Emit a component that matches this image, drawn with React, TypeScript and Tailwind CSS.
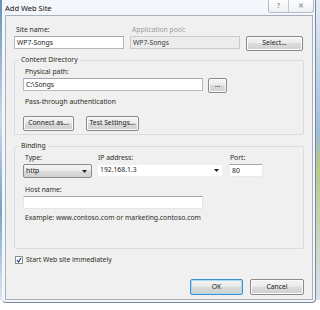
import React from 'react';

const font = { fontFamily: '"Noto Sans", "Open Sans", sans-serif' };

const Button: React.FC<{ label: string; className?: string; primary?: boolean }> = ({ label, className = '', primary }) => (
  <div
    className={`flex items-center justify-center whitespace-nowrap rounded-[2px] border text-[6.8px] text-[#1b1b1b] bg-[linear-gradient(#f4f4f4_0%,#ececec_45%,#dcdcdc_50%,#d0d0d0_100%)] ${
      primary ? 'border-[#3c8fc8] shadow-[inset_0_0_0_1px_#a8dcf5]' : 'border-[#8a8a8a] shadow-[inset_0_0_0_1px_#fbfbfb]'
    } ${className}`}
  >
    {label}
  </div>
);

const Label: React.FC<{ children: React.ReactNode; className?: string }> = ({ children, className = '' }) => (
  <div className={`text-[6.8px] leading-[10px] whitespace-nowrap text-[#2b2b22] ${className}`}>{children}</div>
);

const TextBox: React.FC<{ value?: string; className?: string; disabled?: boolean }> = ({ value = '', className = '', disabled }) => (
  <div
    className={`flex items-center px-[2px] border text-[6.8px] leading-[10px] ${
      disabled ? 'bg-[#ececec] border-[#c9cbcd] text-[#3a3a3a]' : 'bg-white border-[#b5b9bf] border-t-[#9ea3aa] text-[#1b1b1b]'
    } ${className}`}
  >
    {value}
  </div>
);

const Arrow = () => (
  <svg width="5" height="3" viewBox="0 0 5 3">
    <path d="M0 0h5L2.5 3z" fill="#222" />
  </svg>
);

export default function App() {
  return (
    <div className="w-[320px] h-[310px] bg-white relative overflow-hidden" style={font}>
      {/* desktop behind */}
      <div className="absolute left-0 top-0 w-[3px] h-[300px] bg-[linear-gradient(#6b8fb8,#c9d9ea_40%,#7aa0c8_70%,#dde8f2)]" />
      <div className="absolute right-0 top-0 w-[4px] h-[300px] bg-[linear-gradient(#e4ecf4,#9fbbd8_45%,#b6c98a_55%,#d7e3ef)]" />

      {/* window frame */}
      <div className="ml-[2px] w-[314px] h-[303px] flex flex-col bg-[#f3f6fa] border-r border-b border-[#7c8898] rounded-b-[4px] relative">
        <div className="h-[15px] flex items-start pl-[3px] pt-[3px]">
          <span className="text-[7.5px] leading-[10px] text-[#111]">Add Web Site</span>
        </div>
        <div className="absolute right-[1px] top-0 flex h-[13px] border border-t-0 border-[#b3bcc7] rounded-b-[3px] bg-[linear-gradient(#fdfdfd,#eef1f5)]">
          <div className="w-[20px] flex items-center justify-center border-r border-[#c3cad2] text-[7px] text-[#9aa0a7] font-bold">?</div>
          <div className="w-[24px] flex items-center justify-center text-[7px] text-[#9aa0a7] font-bold">✕</div>
        </div>

        {/* client area */}
        <div className="ml-[3px] w-[308px] h-[285px] border border-[#a7b0bb] bg-[#f0f0f0] flex flex-col pl-[8px] pr-[8px]">
          {/* site name row */}
          <div className="flex mt-[9px]">
            <div className="flex flex-col w-[110px]">
              <Label className="pl-[2px]">Site name:</Label>
              <TextBox value="WP7-Songs" className="h-[13px] mt-[1px]" />
            </div>
            <div className="flex flex-col w-[110px] ml-[6px]">
              <Label className="pl-[2px] text-[#9a9a9a]">Application pool:</Label>
              <TextBox value="WP7-Songs" disabled className="h-[13px] mt-[1px]" />
            </div>
            <Button label="Select..." className="w-[57px] h-[15px] ml-[6px] mt-[11px]" />
          </div>

          {/* content directory */}
          <fieldset className="mt-[4px] border border-[#d5dde3] rounded-[2px] px-[8px] pb-[9px] h-[80px]">
            <legend className="px-[2px] ml-[-4px] text-[6.8px] leading-[10px] text-[#2b2b22]">Content Directory</legend>
            <Label className="pl-[2px] mt-[2px]">Physical path:</Label>
            <div className="flex items-start mt-[1px]">
              <TextBox value="C:\Songs" className="w-[180px] h-[13px]" />
              <Button label="..." className="w-[19px] h-[15px] ml-[5px]" />
            </div>
            <Label className="pl-[2px] mt-[4px]">Pass-through authentication</Label>
            <div className="flex mt-[9px]">
              <Button label="Connect as..." className="w-[51px] h-[15px]" />
              <Button label="Test Settings..." className="w-[53px] h-[15px] ml-[12px]" />
            </div>
          </fieldset>

          {/* binding */}
          <fieldset className="mt-[6px] border border-[#d5dde3] rounded-[2px] px-[8px] h-[108px]">
            <legend className="px-[2px] ml-[-4px] text-[6.8px] leading-[10px] text-[#2b2b22]">Binding</legend>
            <div className="flex mt-[2px]">
              <div className="flex flex-col w-[69px]">
                <Label className="pl-[2px]">Type:</Label>
                <div className="flex items-center justify-between h-[14px] mt-[1px] pl-[2px] pr-[4px] rounded-[2px] border border-[#8a8a8a] bg-[linear-gradient(#f4f4f4_0%,#ececec_45%,#dcdcdc_50%,#d0d0d0_100%)] text-[6.8px] text-[#1b1b1b]">
                  <span>http</span>
                  <Arrow />
                </div>
              </div>
              <div className="flex flex-col w-[126px] ml-[5px]">
                <Label className="pl-[1px]">IP address:</Label>
                <div className="flex items-center justify-between h-[13px] mt-[1px] pl-[2px] pr-[3px] bg-white border border-[#f0f0f0] text-[6.8px] text-[#1b1b1b]">
                  <span>192.168.1.3</span>
                  <Arrow />
                </div>
              </div>
              <div className="flex flex-col w-[34px] ml-[6px]">
                <Label className="pl-[1px]">Port:</Label>
                <TextBox value="80" className="h-[13px] mt-[1px] border-[#eaeaea]" />
              </div>
            </div>
            <Label className="pl-[2px] mt-[7px]">Host name:</Label>
            <TextBox className="w-[180px] h-[13px] mt-[1px] border-[#e6e6e6]" />
            <Label className="pl-[2px] mt-[4px]">Example: www.contoso.com or marketing.contoso.com</Label>
          </fieldset>

          {/* start checkbox */}
          <div className="flex items-center mt-[6px] ml-[1px]">
            <div className="w-[8px] h-[8px] border border-[#8e8f8f] bg-white flex items-center justify-center">
              <svg width="6" height="6" viewBox="0 0 6 6">
                <path d="M1 3l1.5 2L5 1" stroke="#1c3f8c" strokeWidth="1.2" fill="none" />
              </svg>
            </div>
            <Label className="ml-[3px]">Start Web site immediately</Label>
          </div>

          {/* buttons */}
          <div className="flex justify-end mt-[14px]">
            <Button label="OK" primary className="w-[53px] h-[16px]" />
            <Button label="Cancel" className="w-[54px] h-[16px] ml-[7px]" />
          </div>
        </div>
      </div>
    </div>
  );
}
